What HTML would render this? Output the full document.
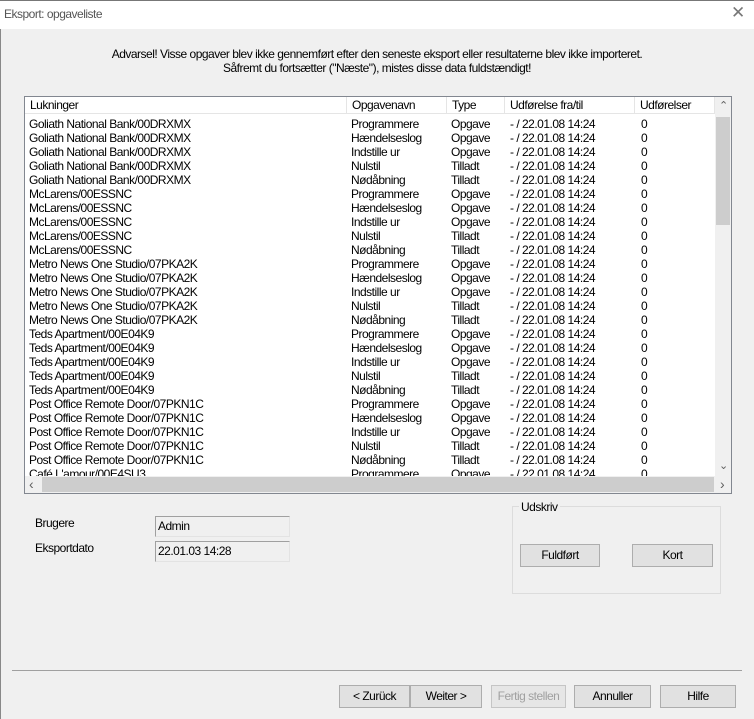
<!DOCTYPE html><html><head><style>
body{margin:0;width:754px;height:719px;background:#f0f0f0;font-family:"Liberation Sans",sans-serif;font-size:12px;letter-spacing:-0.5px;color:#000;position:relative;overflow:hidden}
.a{position:absolute;white-space:nowrap}
.title{left:0;top:0;width:754px;height:28px;background:#fff;border-top:1px solid #777}
.list{left:24px;top:96px;width:706px;height:396px;background:#fff;border:1px solid #828790;overflow:hidden}
.hdr{position:absolute;top:0;height:17px;border-right:1px solid #e5e5e5;border-bottom:1px solid #e5e5e5;line-height:17px;padding-left:5px;box-sizing:border-box}
.row{position:absolute;left:0;width:690px;height:14px;line-height:14px}
.row span{position:absolute}
.btn{position:absolute;height:23px;background:#e1e1e1;border:1px solid #adadad;box-sizing:border-box;text-align:center;line-height:21px}
.field{position:absolute;background:#f0f0f0;border:1px solid #a0a0a0;border-right-color:#e3e3e3;border-bottom-color:#e3e3e3;height:21px;box-sizing:border-box;padding-left:2px;line-height:19px}
</style></head><body>
<div class="a title"><span style="position:absolute;left:4px;top:6px;color:#555">Eksport: opgaveliste</span>
<span style="position:absolute;left:731px;top:2px;font-size:17px;color:#777">✕</span></div>
<div class="a" style="left:0;top:29px;width:1px;height:690px;background:#888"></div>
<div class="a" style="left:0;top:47px;width:754px;text-align:center;line-height:14px">Advarsel! Visse opgaver blev ikke gennemført efter den seneste eksport eller resultaterne blev ikke importeret.<br>Såfremt du fortsætter ("Næste"), mistes disse data fuldstændigt!</div>
<div class="a list">
<div class="hdr" style="left:0;width:322px">Lukninger</div>
<div class="hdr" style="left:322px;width:100px">Opgavenavn</div>
<div class="hdr" style="left:422px;width:58px">Type</div>
<div class="hdr" style="left:480px;width:130px">Udførelse fra/til</div>
<div class="hdr" style="left:610px;width:80px">Udførelser</div>
<div id="rows"></div>
<div style="position:absolute;left:690px;top:0;width:16px;height:379px;background:#f0f0f0"></div>
<div style="position:absolute;left:691px;top:20px;width:14px;height:108px;background:#cdcdcd"></div>
<div style="position:absolute;left:694px;top:2px;font-size:11px;color:#606060">&#8963;</div>
<div style="position:absolute;left:694px;top:362px;font-size:11px;color:#606060">&#8964;</div>
<div style="position:absolute;left:0;top:379px;width:706px;height:17px;background:#f0f0f0"></div>
<div style="position:absolute;left:17px;top:380px;width:672px;height:15px;background:#cdcdcd"></div>
<div style="position:absolute;left:4px;top:379px;font-size:14px;color:#606060">&lsaquo;</div>
<div style="position:absolute;left:695px;top:379px;font-size:14px;color:#606060">&rsaquo;</div>
</div>
<div class="a" style="left:35px;top:516px">Brugere</div>
<div class="a" style="left:35px;top:541px">Eksportdato</div>
<div class="field" style="left:155px;top:516px;width:135px">Admin</div>
<div class="field" style="left:155px;top:541px;width:135px">22.01.03 14:28</div>
<div class="a" style="left:512px;top:506px;width:207px;height:86px;border:1px solid #dcdcdc"></div>
<div class="a" style="left:519px;top:500px;background:#f0f0f0;padding:0 2px">Udskriv</div>
<div class="btn" style="left:520px;top:544px;width:80px">Fuldført</div>
<div class="btn" style="left:632px;top:544px;width:81px">Kort</div>
<div class="a" style="left:12px;top:670px;width:730px;height:1px;background:#a0a0a0"></div>
<div class="btn" style="left:339px;top:685px;width:71px">&lt; Zurück</div>
<div class="btn" style="left:410px;top:685px;width:72px">Weiter &gt;</div>
<div class="btn" style="left:491px;top:685px;width:75px;color:#a0a0a0;background:#e6e6e6;border-color:#c5c5c5">Fertig stellen</div>
<div class="btn" style="left:574px;top:685px;width:77px">Annuller</div>
<div class="btn" style="left:660px;top:685px;width:76px">Hilfe</div>
<script>
var locs=["Goliath National Bank/00DRXMX","McLarens/00ESSNC","Metro News One Studio/07PKA2K","Teds Apartment/00E04K9","Post Office Remote Door/07PKN1C","Café L'amour/00E4SU3"];
var t=[["Programmere","Opgave"],["Hændelseslog","Opgave"],["Indstille ur","Opgave"],["Nulstil","Tilladt"],["Nødåbning","Tilladt"]];
var h="";for(var i=0;i<26;i++){var l=locs[Math.floor(i/5)],k=t[i%5];
h+='<div class="row" style="top:'+(20+14*i)+'px"><span style="left:4px">'+l+'</span><span style="left:326px">'+k[0]+'</span><span style="left:426px">'+k[1]+'</span><span style="left:485px">- / 22.01.08 14:24</span><span style="left:616px">0</span></div>';}
document.getElementById("rows").innerHTML=h;
</script>
</body></html>
